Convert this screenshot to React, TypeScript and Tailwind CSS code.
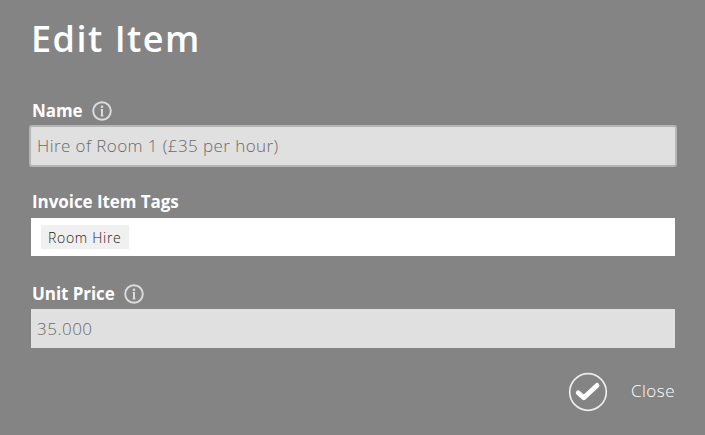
import { ReactNode } from "react";

interface FieldProps {
  label: string;
  info?: boolean;
  children: ReactNode;
}

function InfoIcon() {
  return (
    <svg width="20" height="20" viewBox="0 0 20 20" fill="none" className="ml-[9px]">
      <circle cx="10" cy="10" r="8.8" stroke="#dcdcdc" strokeWidth="1.9" />
      <circle cx="10" cy="5.8" r="1.3" fill="#dcdcdc" />
      <path d="M10 8V15.2" stroke="#dcdcdc" strokeWidth="2" />
      <path d="M8.6 8.5H10M8.4 14.8H11.6" stroke="#dcdcdc" strokeWidth="0.8" />
    </svg>
  );
}

function Field({ label, info = false, children }: FieldProps) {
  return (
    <div>
      <div className="flex h-6 items-center pl-px text-[17px] font-bold tracking-[-0.06px] text-white">
        <label>{label}</label>
        {info && <InfoIcon />}
      </div>
      {children}
    </div>
  );
}

export default function App() {
  return (
    <div className="h-[435px] w-[705px] bg-[#848484] pl-[31px] pr-[30px] pt-[14px] font-['Open_Sans',sans-serif]">
      <h1 className="h-[50px] text-[36px] leading-[50px] font-semibold tracking-[1.5px] text-white">
        Edit Item
      </h1>

      <div className="mt-[35px]">
        <Field label="Name" info>
          <input
            defaultValue="Hire of Room 1 (£35 per hour)"
            className="-mx-0.5 mt-0.5 block h-[42px] w-[648px] rounded-[3px] border-2 border-[#b5b5b5] bg-[#e0e0e0] px-1.5 pb-0.5 text-[17px] font-light tracking-[0.42px] text-[#6a6a6a] outline-none"
          />
        </Field>
      </div>

      <div className="mt-[23px]">
        <Field label="Invoice Item Tags">
          <div className="mt-1 flex h-[38px] items-center bg-white px-2.5">
            <span className="flex h-6 w-[88px] items-center bg-[#f0f0f0] px-[7px] text-[14px] font-light tracking-[0.7px] whitespace-nowrap text-[#222]">
              Room Hire
            </span>
          </div>
        </Field>
      </div>

      <div className="mt-[26px]">
        <Field label="Unit Price" info>
          <input
            defaultValue="35.000"
            className="mt-[3px] block h-[39px] w-full bg-[#e0e0e0] px-1.5 text-[17px] font-light tracking-[0.5px] text-[#6a6a6a] outline-none"
          />
        </Field>
      </div>

      <div className="mt-6 flex items-center justify-end">
        <button type="button" aria-label="Save">
          <svg width="40" height="40" viewBox="0 0 40 40" fill="none">
            <circle cx="20" cy="20" r="18.3" stroke="#ececec" strokeWidth="1.7" />
            <path
              d="M10.2 20.8L15.8 25.7L29 13.4"
              stroke="#fff"
              strokeWidth="4.8"
              strokeLinecap="round"
              strokeLinejoin="round"
            />
          </svg>
        </button>
        <button type="button" className="ml-[23px] pb-0.5 text-[17px] font-light tracking-[0.5px] text-white">
          Close
        </button>
      </div>
    </div>
  );
}
